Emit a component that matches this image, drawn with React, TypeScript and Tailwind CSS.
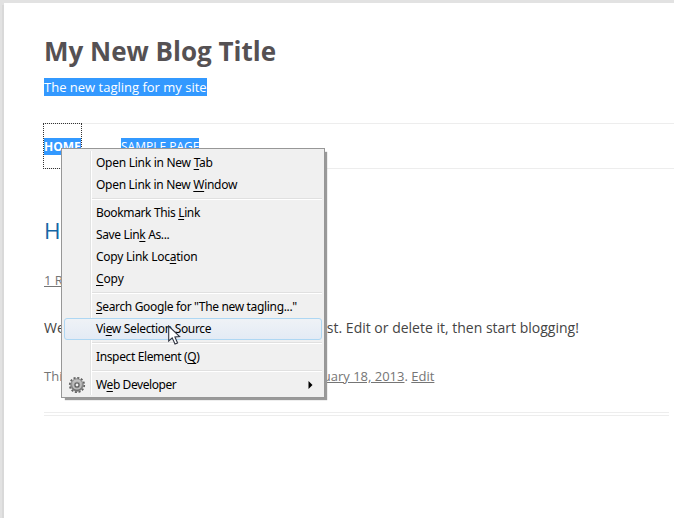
import React from "react";

type Item = { before: string; key: string; after: string; tracking: string; active?: boolean; sub?: boolean };

const groups: Item[][] = [
  [
    { before: "Open Link in New ", key: "T", after: "ab", tracking: "tracking-[-0.27px]" },
    { before: "Open Link in New ", key: "W", after: "indow", tracking: "tracking-[-0.29px]" },
  ],
  [
    { before: "Bookmark This ", key: "L", after: "ink", tracking: "tracking-[-0.36px]" },
    { before: "Save Lin", key: "k", after: " As...", tracking: "tracking-[-0.35px]" },
    { before: "Copy Link Loc", key: "a", after: "tion", tracking: "tracking-[-0.24px]" },
    { before: "", key: "C", after: "opy", tracking: "tracking-[-0.12px]" },
  ],
  [
    { before: "", key: "S", after: 'earch Google for "The new tagling..."', tracking: "tracking-[-0.34px]" },
    { before: "Vi", key: "e", after: "w Selection Source", tracking: "tracking-[-0.33px]", active: true },
  ],
  [{ before: "Inspect Element (", key: "Q", after: ")", tracking: "tracking-[-0.37px]" }],
  [{ before: "W", key: "e", after: "b Developer", tracking: "tracking-[-0.42px]", sub: true }],
];

function Gear() {
  return (
    <svg width="18" height="18" viewBox="0 0 18 18" className="absolute left-[3px] top-[1px]">
      <defs>
        <linearGradient id="metal" x1="0" y1="0" x2="0" y2="1">
          <stop offset="0" stopColor="#cfcfcf" />
          <stop offset="1" stopColor="#666" />
        </linearGradient>
      </defs>
      <circle cx="9" cy="9" r="7.2" fill="none" stroke="#626262" strokeWidth="1.8" strokeDasharray="2.1 1.67" />
      <circle cx="9" cy="9" r="6.2" fill="url(#metal)" stroke="#777" strokeWidth="0.9" />
      <circle cx="9" cy="9" r="4" fill="#a0a0a0" stroke="#c4c4c4" strokeWidth="1.2" />
      <circle cx="9" cy="9" r="2" fill="#f2f2f2" stroke="#5c5c5c" strokeWidth="1.1" />
    </svg>
  );
}

function MenuRow({ item }: { item: Item }) {
  return (
    <div
      className={`relative flex h-[22px] items-center rounded-[3px] border pl-[31px] ${
        item.active ? "border-[#aed7f3] bg-linear-to-b from-[#eff2f6] to-[#e3ebf5]" : "border-transparent"
      }`}
    >
      {item.sub && <Gear />}
      <span className={`whitespace-pre ${item.tracking}`}>
        {item.before}
        <span className="underline decoration-1 underline-offset-2">{item.key}</span>
        {item.after}
      </span>
      {item.sub && (
        <svg width="5" height="8" viewBox="0 0 5 8" className="absolute right-[8px] top-[6px]">
          <path d="M0.5 0L4.5 4L0.5 8Z" fill="#000" />
        </svg>
      )}
    </div>
  );
}

function ContextMenu() {
  return (
    <div className="absolute left-[61px] top-[148px] h-[250px] w-[264px] border border-[#979797] bg-[#f0f0f0] px-[2px] pt-[3px] font-['Noto_Sans','Open_Sans',sans-serif] text-[12px] leading-[20px] text-black shadow-[3px_3px_1px_-1px_#999999]">
      <div className="absolute bottom-[2px] left-[28px] top-[2px] w-[2px] border-l border-r border-l-[#e2e3e3] border-r-white" />
      {groups.map((group, i) => (
        <React.Fragment key={i}>
          {i > 0 && (
            <div className="flex h-[6px] items-center pl-[28px]">
              <div className="h-[2px] w-full border-b border-t border-b-white border-t-[#e0e0e0]" />
            </div>
          )}
          {group.map((item) => (
            <MenuRow key={item.before + item.key + item.after} item={item} />
          ))}
        </React.Fragment>
      ))}
    </div>
  );
}

export default function App() {
  return (
    <div className="relative h-[518px] w-[674px] overflow-hidden bg-[#e2e2e2] pl-[4px] pt-[3px] font-['Open_Sans','Noto_Sans',sans-serif]">
      <div className="h-full bg-white pl-[40px] pt-[30px] shadow-[-2px_2px_0_#d9d9d9]">
        <h1 className="h-[36px] whitespace-nowrap text-[26px] font-bold leading-[36px] text-[#555153]">My New Blog Title</h1>
        <div className="mt-[9px] flex h-[18px]">
          <span className="whitespace-nowrap bg-[#3399ff] text-[13px] leading-[18px] text-white">The new tagling for my site</span>
        </div>
        <nav className="mt-[27px] flex h-[46px] items-center gap-[40px] border-b border-t border-[#ededed] text-[12px] leading-[17px]">
          <span className="-my-px -ml-px flex h-[46px] w-[39px] shrink-0 items-center border border-dotted border-[#333]">
            <span className="bg-[#3399ff] font-bold text-white">HOME</span>
          </span>
          <span className="-ml-px bg-[#3399ff] text-white">SAMPLE PAGE</span>
        </nav>
        <h2 className="mt-[46px] h-[32px] text-[22.5px] leading-[32px] text-[#1666a5]">Hello world!</h2>
        <div className="mt-[23px] h-[20px] text-[13px] leading-[20px] text-[#757575] underline">1 Reply</div>
        <p className="mt-[26px] h-[24px] whitespace-nowrap text-[14px] leading-[24px] text-[#444]">
          Welcome to WordPress. This is your first post. Edit or delete it, then start blogging!
        </p>
        <div className="mt-[25px] h-[22px] whitespace-nowrap text-[13px] leading-[22px] text-[#757575]">
          This entry was posted in <u>Uncategorized</u> on <u>January 18, 2013</u>. <u>Edit</u>
        </div>
        <div className="mt-[25px] h-[4px] w-[625px] border-b border-t border-[#ededed]" />
      </div>
      <ContextMenu />
      <svg width="14" height="21" viewBox="0 0 14 21" className="absolute left-[168px] top-[325px]">
        <path d="M0.7 1L0.7 16L4.2 12.8L7 19L9.6 17.9L6.9 11.9L11.6 11.5Z" fill="#fff" stroke="#303440" strokeWidth="1.1" />
      </svg>
    </div>
  );
}
